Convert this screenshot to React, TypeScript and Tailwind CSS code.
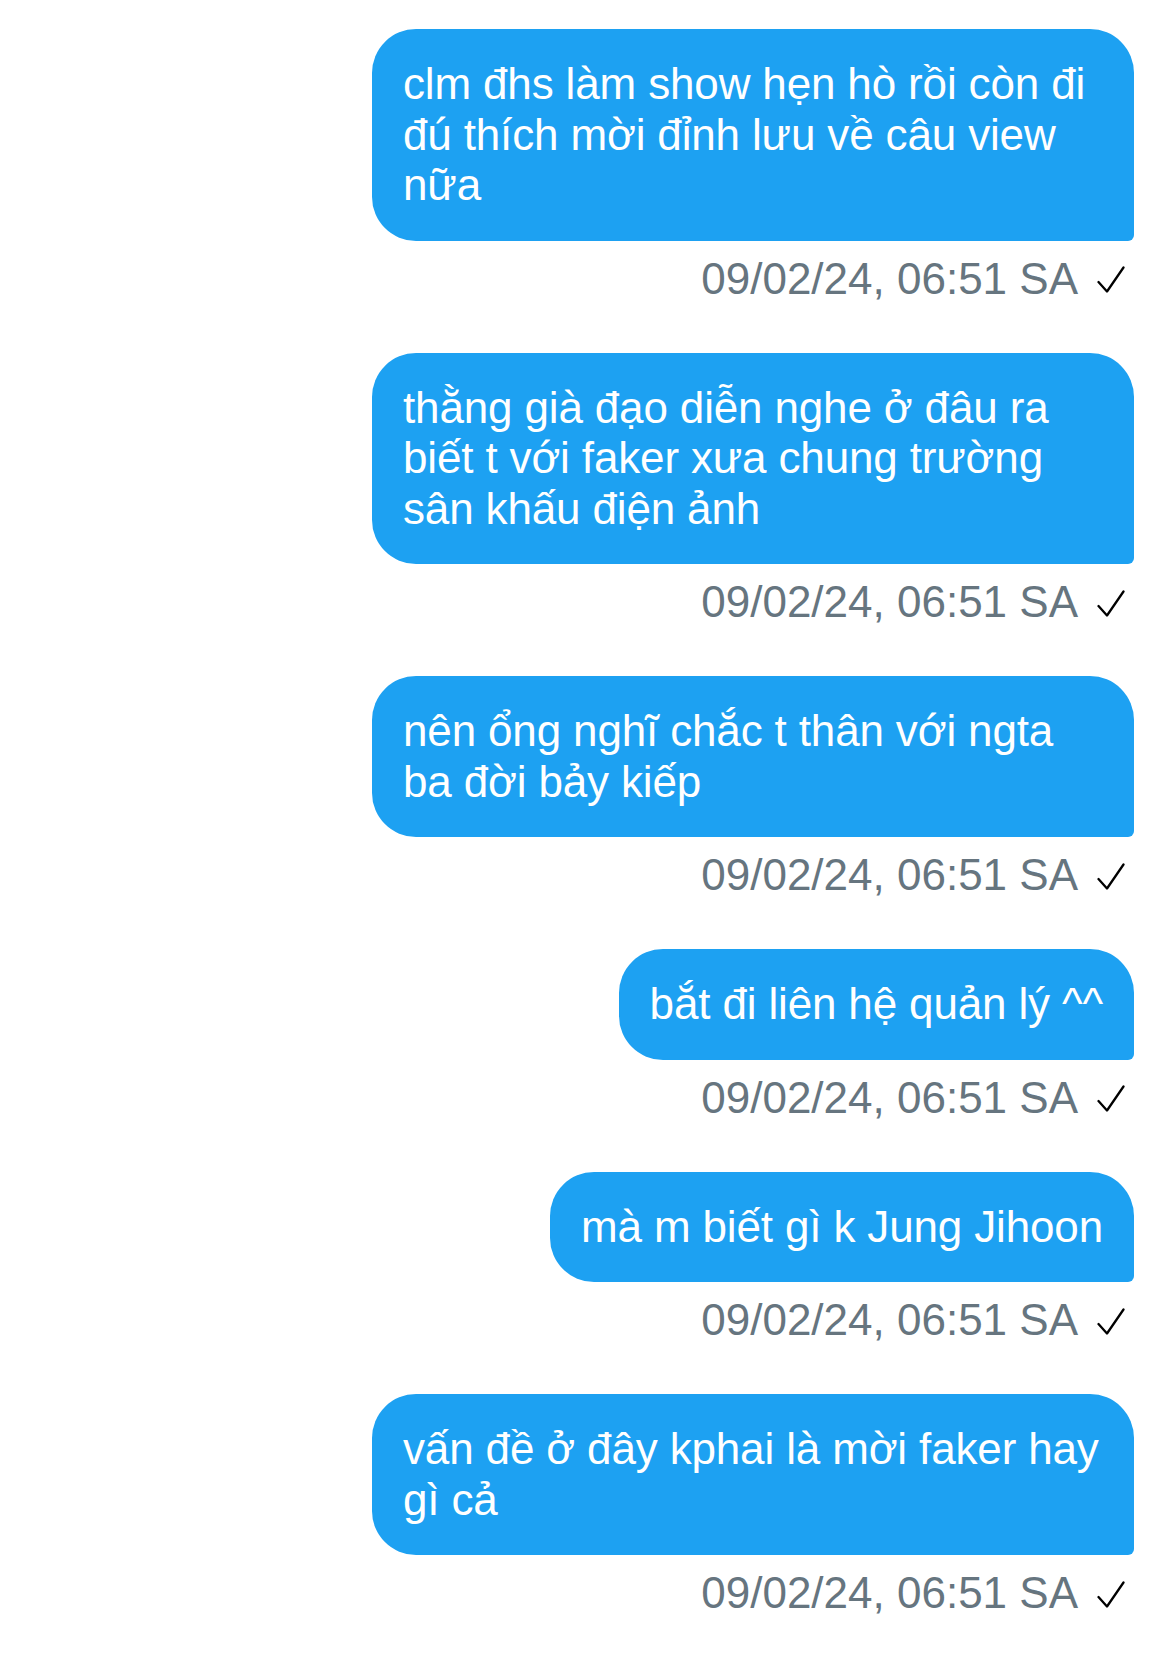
import React from 'react';

const messages = [
  'clm đhs làm show hẹn hò rồi còn đi đú thích mời đỉnh lưu về câu view nữa',
  'thằng già đạo diễn nghe ở đâu ra biết t với faker xưa chung trường sân khấu điện ảnh',
  'nên ổng nghĩ chắc t thân với ngta ba đời bảy kiếp',
  'bắt đi liên hệ quản lý ^^',
  'mà m biết gì k Jung Jihoon',
  'vấn đề ở đây kphai là mời faker hay gì cả',
];

const Check = () => (
  <svg width="28" height="27" viewBox="0 0 28 27" className="ml-[19px] mt-[2px] text-black" fill="none">
    <path d="M1.5 16 L10 25.5 L26.5 1.5" stroke="currentColor" strokeWidth="2.3" strokeLinecap="round" strokeLinejoin="round" />
  </svg>
);

export default function App() {
  return (
    <div className="min-h-[1665px] bg-white pt-[29px] pr-[36px] font-['Liberation_Sans',sans-serif]">
      <div className="flex flex-col items-end gap-[50px]">
        {messages.map((text, i) => (
          <div key={i} className="flex flex-col items-end">
            <div className="max-w-[762px] rounded-[44px] rounded-br-[6px] bg-[#1da1f2] px-[31px] py-[30px] text-[44px] leading-[50.5px] tracking-[-0.15px] text-white">
              {text}
            </div>
            <div className="mt-[14px] flex h-[48px] items-center pr-[9px] text-[44px] text-[#66757f]">
              <span>09/02/24, 06:51 SA</span>
              <Check />
            </div>
          </div>
        ))}
      </div>
    </div>
  );
}
